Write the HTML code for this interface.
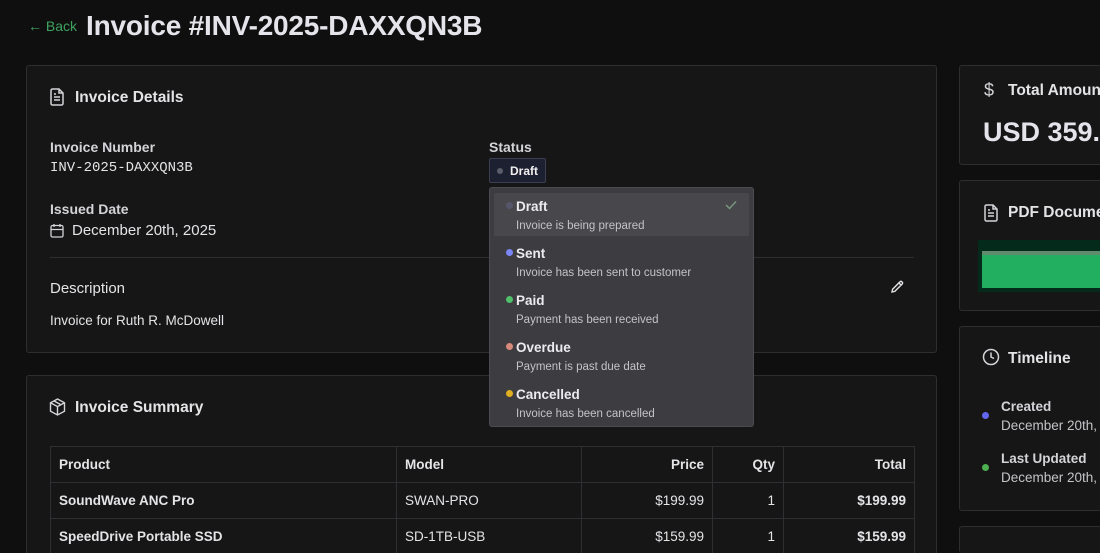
<!DOCTYPE html>
<html style="width:1100px;height:553px;overflow:hidden"><head><meta charset="utf-8"><style>
*{box-sizing:border-box;margin:0;padding:0}
body{width:1100px;height:553px;overflow:hidden;background:#0f0f10;font-family:"Liberation Sans",sans-serif;color:#e4e4e7;position:relative}
.a{position:absolute;white-space:nowrap}
.card{position:absolute;background:#161617;border:1px solid #2e2e31;border-radius:3px}
.lbl{font-size:14px;font-weight:bold;color:#d4d4d8}
.h{font-size:15.5px;font-weight:bold;color:#e4e4e7}
svg{position:absolute}
table{position:absolute;left:50px;top:446px;border-collapse:collapse;font-size:13.5px}
td{border:1px solid #2e2e33;height:36px;padding:0 8px;color:#e4e4e7}
.r{text-align:right}
.b{font-weight:bold}
.dd{position:absolute;left:489px;top:187px;width:265px;height:240px;background:#3c3c41;border:1px solid #4a4a50;border-radius:3px}
.it{position:absolute;left:26px;font-size:13.5px;font-weight:bold;color:#ececef}
.sub{position:absolute;left:26px;font-size:11.5px;color:#c4c4c8}
.dot{position:absolute;left:16px;width:7px;height:7px;border-radius:50%}
</style></head><body>
<div class="a" style="left:28px;top:18px;font-size:14px;color:#3fa35f">← Back</div>
<div class="a" style="left:86px;top:10px;font-size:28px;font-weight:bold;color:#e4e4ea;letter-spacing:-0.2px">Invoice #INV-2025-DAXXQN3B</div>

<div class="card" style="left:26px;top:65px;width:911px;height:288px"></div>
<svg style="left:49px;top:88px" width="16" height="18" viewBox="0 0 16 18" fill="none" stroke="#d4d4d8" stroke-width="1.5"><path d="M2 2.5a1.5 1.5 0 0 1 1.5-1.5H10l4 4v10.5a1.5 1.5 0 0 1-1.5 1.5h-9A1.5 1.5 0 0 1 2 15.5z M10 1v4h4 M5 9h6 M5 12h6 M5 6h2"/></svg>
<div class="a h" style="left:75px;top:89px">Invoice Details</div>
<div class="a lbl" style="left:50px;top:139px">Invoice Number</div>
<div class="a" style="left:50px;top:160px;font-family:'Liberation Mono',monospace;font-size:14px;color:#e4e4e7">INV-2025-DAXXQN3B</div>
<div class="a lbl" style="left:50px;top:201px">Issued Date</div>
<svg style="left:50px;top:223px" width="14" height="15" viewBox="0 0 14 15" fill="none" stroke="#d4d4d8" stroke-width="1.3"><rect x="1" y="2.5" width="12" height="11.5" rx="1.5"/><path d="M1 6.5h12 M4 1v3 M10 1v3"/></svg>
<div class="a" style="left:72px;top:222px;font-size:15px;color:#e4e4e7">December 20th, 2025</div>
<div class="a" style="left:50px;top:257px;width:864px;height:1px;background:#2e2e33"></div>
<div class="a h" style="left:50px;top:280px;font-weight:normal;color:#e4e4e7;font-size:15px">Description</div>
<svg style="left:890px;top:280px" width="14" height="14" viewBox="0 0 14 14" fill="none" stroke="#e4e4e7" stroke-width="1.4"><path d="M2 12l.6-2.8L10 1.8a1.3 1.3 0 0 1 1.9 0l.3.3a1.3 1.3 0 0 1 0 1.9L4.8 11.4z M9 3l2 2"/></svg>
<div class="a" style="left:50px;top:313px;font-size:13.5px;color:#e4e4e7">Invoice for Ruth R. McDowell</div>
<div class="a lbl" style="left:489px;top:139px">Status</div>
<div class="a" style="left:489px;top:158px;width:57px;height:25px;background:#1d2030;border:1px solid #3a3f52;border-radius:2px"></div>
<div class="a" style="left:497px;top:168px;width:6px;height:6px;border-radius:50%;background:#5a5d6a"></div>
<div class="a" style="left:510px;top:164px;font-size:12px;font-weight:bold;color:#f0f0f0">Draft</div>

<div class="card" style="left:26px;top:375px;width:911px;height:178px;border-bottom:none;border-radius:3px 3px 0 0"></div>
<svg style="left:49px;top:398px" width="17" height="18" viewBox="0 0 17 18" fill="none" stroke="#d4d4d8" stroke-width="1.4"><path d="M8.5 1l7 3.8v8.4l-7 3.8-7-3.8V4.8z M1.5 4.8l7 3.8 7-3.8 M8.5 8.6V17 M5 3l7 3.8"/></svg>
<div class="a h" style="left:75px;top:399px">Invoice Summary</div>
<table>
<tr class="b"><td style="width:346px">Product</td><td style="width:185px">Model</td><td class="r" style="width:131px">Price</td><td class="r" style="width:71px">Qty</td><td class="r" style="width:131px">Total</td></tr>
<tr><td class="b">SoundWave ANC Pro</td><td>SWAN-PRO</td><td class="r">$199.99</td><td class="r">1</td><td class="r b">$199.99</td></tr>
<tr><td class="b">SpeedDrive Portable SSD</td><td>SD-1TB-USB</td><td class="r">$159.99</td><td class="r">1</td><td class="r b">$159.99</td></tr>
</table>

<div class="card" style="left:959px;top:65px;width:160px;height:100px"></div>
<div class="a" style="left:984px;top:80px;font-size:18px;color:#d4d4d8">$</div>
<div class="a h" style="left:1008px;top:82px">Total Amount</div>
<div class="a" style="left:983px;top:117px;font-size:27px;font-weight:bold;color:#e4e4ea">USD 359.98</div>
<div class="card" style="left:959px;top:180px;width:160px;height:131px"></div>
<svg style="left:983px;top:204px" width="16" height="18" viewBox="0 0 16 18" fill="none" stroke="#d4d4d8" stroke-width="1.5"><path d="M2 2.5a1.5 1.5 0 0 1 1.5-1.5H10l4 4v10.5a1.5 1.5 0 0 1-1.5 1.5h-9A1.5 1.5 0 0 1 2 15.5z M10 1v4h4 M5 9h6 M5 12h6 M5 6h2"/></svg>
<div class="a h" style="left:1008px;top:204px">PDF Document</div>
<div class="a" style="left:978px;top:240px;width:140px;height:52px;background:#032a1a"></div>
<div class="a" style="left:982px;top:251px;width:140px;height:37px;background:#22b060;border-top:4px solid #5f8c6e"></div>
<div class="card" style="left:959px;top:326px;width:160px;height:185px"></div>
<svg style="left:982px;top:348px" width="18" height="18" viewBox="0 0 18 18" fill="none" stroke="#d4d4d8" stroke-width="1.5"><circle cx="9" cy="9" r="7.5"/><path d="M9 4.5V9l3 1.5"/></svg>
<div class="a h" style="left:1008px;top:350px">Timeline</div>
<div class="a" style="left:982px;top:412px;width:7px;height:7px;border-radius:50%;background:#6366f1"></div>
<div class="a lbl" style="left:1001px;top:399px;font-size:13.5px">Created</div>
<div class="a" style="left:1001px;top:418px;font-size:13.5px;color:#c4c4c8">December 20th, 2025</div>
<div class="a" style="left:982px;top:464px;width:7px;height:7px;border-radius:50%;background:#4caf50"></div>
<div class="a lbl" style="left:1001px;top:451px;font-size:13.5px">Last Updated</div>
<div class="a" style="left:1001px;top:470px;font-size:13.5px;color:#c4c4c8">December 20th, 2025</div>
<div class="card" style="left:959px;top:526px;width:160px;height:27px;border-bottom:none"></div>

<div class="dd">
<div class="a" style="left:4px;top:5px;width:255px;height:43px;background:#47474c;border-radius:2px"></div>
<div class="dot" style="top:14px;background:#55566a"></div><div class="it" style="top:11px">Draft</div><div class="sub" style="top:32px">Invoice is being prepared</div>
<svg style="left:235px;top:12px" width="12" height="10" viewBox="0 0 12 10" fill="none" stroke="#7a9a80" stroke-width="1.4"><path d="M1 5l3.5 3.5L11 1.5"/></svg>
<div class="dot" style="top:61px;background:#7a86f5"></div><div class="it" style="top:58px">Sent</div><div class="sub" style="top:79px">Invoice has been sent to customer</div>
<div class="dot" style="top:108px;background:#4fbf6a"></div><div class="it" style="top:105px">Paid</div><div class="sub" style="top:126px">Payment has been received</div>
<div class="dot" style="top:155px;background:#d88a7a"></div><div class="it" style="top:152px">Overdue</div><div class="sub" style="top:173px">Payment is past due date</div>
<div class="dot" style="top:202px;background:#e0b020"></div><div class="it" style="top:199px">Cancelled</div><div class="sub" style="top:220px">Invoice has been cancelled</div>
</div>
</body></html>
